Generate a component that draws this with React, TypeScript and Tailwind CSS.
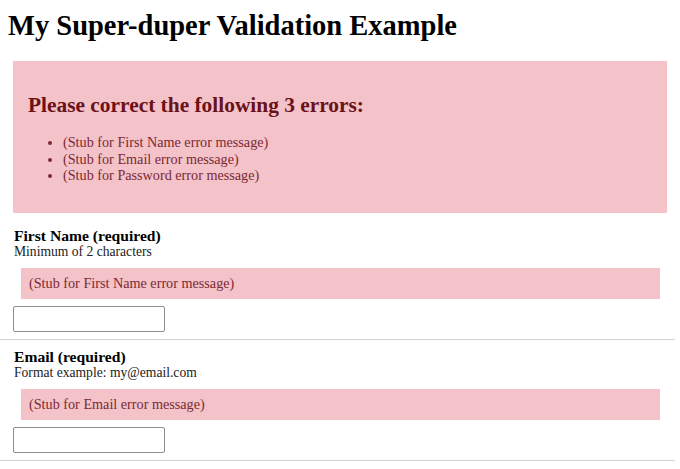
import React from "react";

const serif = { fontFamily: '"Liberation Serif", "Times New Roman", serif' };

function Field({ label, hint, error }: { label: string; hint: string; error: string }) {
  return (
    <div className="border-b border-[#d4d4d4] pt-[8px] pb-[7px]">
      <div className="pl-[14px] text-[15.6px] font-bold leading-[17px] text-black">{label}</div>
      <div className="pl-[14px] text-[13.6px] leading-[16px] text-[#222]">{hint}</div>
      <div className="ml-[21px] mr-[15px] mt-[8px] h-[31px] bg-[#f4c2c9] pl-[8px] text-[14.2px] leading-[31px] text-[#7a2a33]">
        {error}
      </div>
      <div className="pl-[13px] pt-[7px]">
        <input className="block h-[26px] w-[152px] rounded-[2px] border border-[#8f8f8f] bg-white" />
      </div>
    </div>
  );
}

export default function App() {
  return (
    <div className="w-[680px] bg-white" style={serif}>
      <h1 className="pl-[8px] pt-[9px] text-[28.5px] font-bold leading-[33px] text-black">
        My Super-duper Validation Example
      </h1>
      <div className="mx-[13px] mt-[19px] h-[152px] bg-[#f4c2c9] pl-[15px] pt-[32px] text-[#6b1219]">
        <h2 className="text-[21.4px] font-bold leading-[24px]">Please correct the following 3 errors:</h2>
        <ul className="mt-[17px] list-disc pl-[35px] text-[14.2px] leading-[16.5px] text-[#7a2a33]">
          <li>(Stub for First Name error message)</li>
          <li>(Stub for Email error message)</li>
          <li>(Stub for Password error message)</li>
        </ul>
      </div>
      <div className="mr-[5px] mt-[6px]">
        <Field label="First Name (required)" hint="Minimum of 2 characters" error="(Stub for First Name error message)" />
        <Field label="Email (required)" hint="Format example: my@email.com" error="(Stub for Email error message)" />
      </div>
    </div>
  );
}
